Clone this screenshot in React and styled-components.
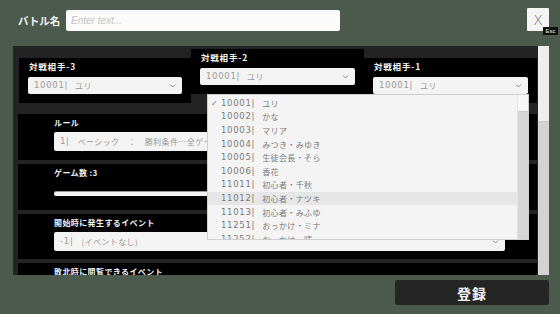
import React from "react";
import styled, { createGlobalStyle } from "styled-components";

const GlobalStyle = createGlobalStyle`
  html, body { margin: 0; padding: 0; background: #4b5a4c; }
  * { box-sizing: border-box; }
`;

const FONT = `"Noto Sans CJK JP", "Noto Sans", sans-serif`;

const Screen = styled.div`
  position: relative;
  width: 560px;
  height: 314px;
  overflow: hidden;
  background: #4b5a4c;
  font-family: ${FONT};
  display: flex;
  flex-direction: column;
`;

const TopBar = styled.div`
  display: flex;
  align-items: center;
  height: 31px;
  padding: 8px 11px 0 18px;
`;

const TitleLabel = styled.div`
  color: #f2f2f2;
  font-size: 10.5px;
  font-weight: 700;
  line-height: 14px;
  width: 48px;
  padding-top: 2px;
`;

const NameInput = styled.div`
  width: 274px;
  height: 21px;
  margin-top: 2px;
  background: #fbfbfb;
  border-radius: 2px;
  padding-left: 5px;
  display: flex;
  align-items: center;
  color: #c4c4c4;
  font-family: "Liberation Sans", sans-serif;
  font-style: italic;
  font-size: 10px;
`;

const CloseButton = styled.div`
  position: relative;
  margin-left: auto;
  width: 22px;
  height: 23px;
  background: #f4f4f4;
  border-radius: 1px;
  display: flex;
  align-items: center;
  justify-content: center;
  color: #707070;
  font-family: "DejaVu Sans", sans-serif;
  font-size: 14px;
  font-weight: 300;
`;

const EscBadge = styled.span`
  position: absolute;
  left: 16px;
  top: 19px;
  width: 15px;
  height: 8px;
  background: #111;
  color: #e8e8e8;
  font-family: "Liberation Sans", sans-serif;
  font-size: 6px;
  line-height: 8px;
  text-align: center;
`;

const Panel = styled.div`
  display: flex;
  margin: 15px 11px 0 13px;
  height: 229px;
`;

const PanelContent = styled.div`
  flex: 1;
  background: #222322;
  overflow: hidden;
`;

const PanelScroll = styled.div`
  width: 11px;
  background: #d3d3d3;
  display: flex;
  flex-direction: column;
`;

const PanelThumb = styled.div`
  height: 76px;
  background: #ededed;
  border-bottom: 1px solid #c6c6c6;
`;

const OpponentRow = styled.div`
  display: flex;
  align-items: flex-start;
  padding: 12px 0 0 6px;
  height: 57px;
`;

const OpponentCard = styled.div`
  width: ${(p) => p.$w}px;
  height: 45px;
  margin-top: ${(p) => (p.$raised ? "-9px" : "0")};
  background: #000;
  padding: 2px 9px 0 9px;
`;

const CardLabel = styled.div`
  color: #f4f4f4;
  font-size: 8.5px;
  font-weight: 700;
  letter-spacing: 0.8px;
  line-height: 12px;
  padding-left: 1px;
`;

const SelectBox = styled.div`
  position: relative;
  width: ${(p) => (p.$w ? `${p.$w}px` : "100%")};
  height: ${(p) => p.$h}px;
  margin-top: ${(p) => p.$mt}px;
  background: #f3f3f3;
  border-radius: 2px;
  display: flex;
  align-items: center;
  padding-left: 6px;
  color: #9a9a9a;
  white-space: pre;
  overflow: hidden;
  line-height: 12px;
`;

const Code = styled.span`
  font-family: "DejaVu Sans", sans-serif;
  font-size: 8.5px;
  letter-spacing: 0.7px;
  line-height: 11px;
  color: ${(p) => p.$c || "#9a9a9a"};
`;

const Name = styled.span`
  font-size: 8px;
  letter-spacing: 0.4px;
  line-height: 11px;
  margin-left: ${(p) => p.$ml ?? 7}px;
  color: ${(p) => p.$c || "#9a9a9a"};
`;

const Chevron = styled.svg`
  position: absolute;
  right: 6px;
  top: 50%;
  margin-top: -3px;
  width: 7px;
  height: 6px;
`;

const Sections = styled.div`
  margin: 11px 1px 0 5px;
  display: flex;
  flex-direction: column;
  gap: 4px;
`;

const Section = styled.div`
  height: ${(p) => p.$h || 46}px;
  background: #000;
  padding: 3px 0 0 36px;
  flex-shrink: 0;
`;

const SectionLabel = styled.div`
  color: #f2f2f2;
  font-size: 8px;
  font-weight: 700;
  letter-spacing: 0.4px;
  line-height: 12px;
`;

const SliderTrack = styled.div`
  width: 451px;
  height: 4px;
  margin-top: 13px;
  background: #f4f4f4;
  border-radius: 2px;
  box-shadow: 0 -1px 0 #9a9a9a;
`;

const Footer = styled.div`
  display: flex;
  justify-content: flex-end;
  padding: 5px 11px 0 0;
`;

const RegisterButton = styled.div`
  width: 154px;
  height: 25px;
  background: #242524;
  border-radius: 3px;
  color: #f4f4f4;
  font-size: 14px;
  font-weight: 700;
  letter-spacing: 1px;
  display: flex;
  align-items: center;
  justify-content: center;
`;

const Dropdown = styled.div`
  position: absolute;
  left: 208px;
  top: 95px;
  width: 320px;
  height: 144px;
  background: #f4f4f4;
  box-shadow: 0 0 0 1px #cfcfcf;
  display: flex;
  overflow: hidden;
`;

const OptionList = styled.div`
  flex: 1;
  padding-top: 1.5px;
`;

const Option = styled.div`
  height: 13.6px;
  line-height: 11px;
  display: flex;
  align-items: center;
  padding-left: ${(p) => (p.$checked ? 3 : 13)}px;
  background: ${(p) => (p.$hover ? "#e6e6e6" : "transparent")};
  white-space: pre;
  overflow: hidden;
`;

const Check = styled.span`
  width: 10px;
  font-family: "DejaVu Sans", sans-serif;
  font-size: 8px;
  color: #707070;
`;

const DropScroll = styled.div`
  width: 11px;
  background: #d5d5d5;
  border-left: 1px solid #e2e2e2;
`;

const DropThumb = styled.div`
  height: 17px;
  background: #f7f7f7;
  border-bottom: 1px solid #c9c9c9;
`;

const ChevronIcon = () => (
  <Chevron viewBox="0 0 7 6">
    <path d="M1 1.5 L3.5 4 L6 1.5" fill="none" stroke="#8a8a8a" strokeWidth="1" />
  </Chevron>
);

const options = [
  ["10001", "ユリ"],
  ["10002", "かな"],
  ["10003", "マリア"],
  ["10004", "みつき・みゆき"],
  ["10005", "生徒会長・そら"],
  ["10006", "香花"],
  ["11011", "初心者・千秋"],
  ["11012", "初心者・ナツキ"],
  ["11013", "初心者・みふゆ"],
  ["11251", "おっかけ・ミナ"],
  ["11252", "おっかけ・晴"],
];

const opponents = [
  { label: "対戦相手-3", w: 172 },
  { label: "対戦相手-2", w: 173, raised: true },
  { label: "対戦相手-1", w: 173 },
];

export default function App() {
  return (
    <>
      <GlobalStyle />
      <Screen>
        <TopBar>
          <TitleLabel>バトル名</TitleLabel>
          <NameInput>Enter text...</NameInput>
          <CloseButton>
            X<EscBadge>Esc</EscBadge>
          </CloseButton>
        </TopBar>

        <Panel>
          <PanelContent>
            <OpponentRow>
              {opponents.map((o) => (
                <OpponentCard key={o.label} $w={o.w} $raised={o.raised}>
                  <CardLabel>{o.label}</CardLabel>
                  <SelectBox $h={17} $mt={5}>
                    <Code>10001|</Code>
                    <Name>ユリ</Name>
                    <ChevronIcon />
                  </SelectBox>
                </OpponentCard>
              ))}
            </OpponentRow>

            <Sections>
              <Section>
                <SectionLabel>ルール</SectionLabel>
                <SelectBox $w={451} $h={19} $mt={3}>
                  <Code>1|</Code>
                  <Name $ml={8}>ベーシック　：　勝利条件…全ゲームで勝利</Name>
                  <ChevronIcon />
                </SelectBox>
              </Section>
              <Section>
                <SectionLabel>ゲーム数 :3</SectionLabel>
                <SliderTrack />
              </Section>
              <Section $h={45}>
                <SectionLabel>開始時に発生するイベント</SectionLabel>
                <SelectBox $w={451} $h={19} $mt={3}>
                  <Code>-1|</Code>
                  <Name $ml={8}>(イベントなし)</Name>
                  <ChevronIcon />
                </SelectBox>
              </Section>
              <Section>
                <SectionLabel>敗北時に閲覧できるイベント</SectionLabel>
              </Section>
            </Sections>
          </PanelContent>
          <PanelScroll>
            <PanelThumb />
          </PanelScroll>
        </Panel>

        <Footer>
          <RegisterButton>登録</RegisterButton>
        </Footer>

        <Dropdown>
          <OptionList>
            {options.map(([code, name], i) => (
              <Option key={code} $checked={i === 0} $hover={code === "11012"}>
                {i === 0 && <Check>✓</Check>}
                <Code $c="#7a7a7a">{code}|</Code>
                <Name $c="#7a7a7a">{name}</Name>
              </Option>
            ))}
          </OptionList>
          <DropScroll>
            <DropThumb />
          </DropScroll>
        </Dropdown>
      </Screen>
    </>
  );
}
